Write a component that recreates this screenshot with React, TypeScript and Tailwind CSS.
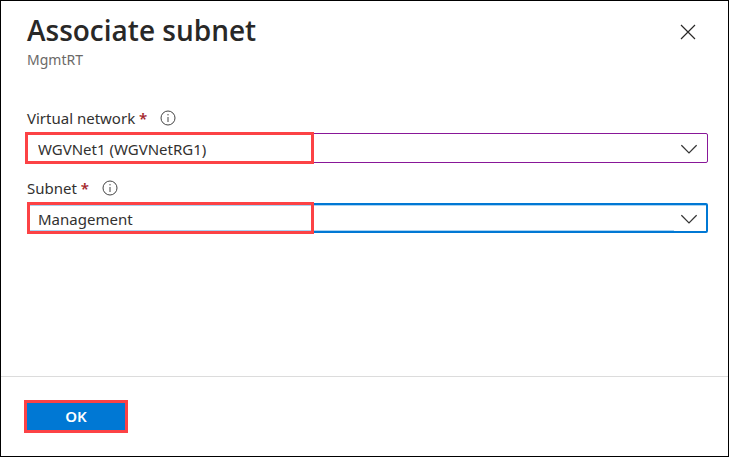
import { useState } from "react";

function InfoIcon() {
  return (
    <svg aria-hidden="true" className="size-4" viewBox="0 0 16 16" fill="none" stroke="#444444">
      <circle cx="8" cy="8" r="7" />
      <path d="M8 7v5" />
      <path d="M8 4v1.4" />
    </svg>
  );
}

function Chevron() {
  return (
    <svg
      aria-hidden="true"
      className="h-2.5 w-4"
      viewBox="0 0 16 10"
      fill="none"
      stroke="#333333"
      strokeWidth="1.2"
    >
      <path d="M0.4 1.2 8 8.8l7.6-7.6" />
    </svg>
  );
}

type FieldProps = {
  id: string;
  label: string;
  options: string[];
  focused?: boolean;
};

function Field({ id, label, options, focused = false }: FieldProps) {
  const [value, setValue] = useState(options[0]);
  return (
    <div>
      <div className="flex h-5 items-center text-[15px] leading-5">
        <label htmlFor={id}>
          {label} <span className="font-semibold text-[#a4262c]">*</span>
        </label>
        <span className="ml-[13px]">
          <InfoIcon />
        </span>
      </div>
      <div
        className={
          focused
            ? "relative mt-[5px] h-[30px] rounded-xs border-2 border-[#0078d4]"
            : "relative mt-[5px] h-[30px] rounded-xs border border-[#881798] px-px"
        }
      >
        <select
          id={id}
          value={value}
          onChange={(e) => setValue(e.target.value)}
          className={
            focused
              ? "block h-full w-full appearance-none border-t border-[#a9d3f2] bg-white pt-px pl-[9px] text-[15px] outline-none"
              : "block h-full w-full appearance-none bg-white pt-0.5 pl-[9px] text-[15px] outline-none"
          }
        >
          {options.map((o) => (
            <option key={o}>{o}</option>
          ))}
        </select>
        {focused && (
          <div className="pointer-events-none absolute right-8 bottom-0 left-0 border-b border-[#a9d3f2]" />
        )}
        <div
          className={
            focused
              ? "pointer-events-none absolute inset-y-0 right-[9px] flex items-center pt-px"
              : "pointer-events-none absolute inset-y-0 right-2.5 flex items-center pt-px"
          }
        >
          <Chevron />
        </div>
        <div
          className={
            focused
              ? "pointer-events-none absolute -inset-y-[3px] -left-0.5 w-[287px] border-3 border-[#fc4245]"
              : "pointer-events-none absolute -inset-y-0.5 -left-[3px] w-[289px] border-3 border-[#fc4245]"
          }
        />
      </div>
    </div>
  );
}

export default function App() {
  return (
    <main className="flex min-h-screen flex-col border border-black bg-white font-['Noto_Sans','Open_Sans',sans-serif] text-[#323130]">
      <header className="flex items-start justify-between pt-[11px] pr-8 pl-[26px]">
        <div>
          <h1 className="font-['Open_Sans','Noto_Sans',sans-serif] text-[28px] leading-9 font-semibold text-[#292827]">
            Associate subnet
          </h1>
          <p className="mt-0.5 text-sm leading-5 text-[#6b6967]">MgmtRT</p>
        </div>
        <button type="button" aria-label="Close" className="mt-3 flex size-4 items-center justify-center">
          <svg aria-hidden="true" className="size-4" viewBox="0 0 16 16" fill="none" stroke="#292827" strokeWidth="1.2">
            <path d="M1 1l14 14M15 1 1 15" />
          </svg>
        </button>
      </header>
      <form className="flex flex-1 flex-col" onSubmit={(e) => e.preventDefault()}>
        <div className="flex flex-1 flex-col gap-[15px] pt-[38px] pr-5 pl-[26px]">
          <Field id="vnet" label="Virtual network" options={["WGVNet1 (WGVNetRG1)"]} />
          <Field id="subnet" label="Subnet" options={["Management"]} focused />
        </div>
        <footer className="border-t border-[#dcdcdc] px-[23px] py-[23px]">
          <button
            type="submit"
            className="block h-[33px] w-[104px] border-3 border-[#fc4245] bg-[#0078d4] text-[15px] font-semibold text-white"
          >
            OK
          </button>
        </footer>
      </form>
    </main>
  );
}
